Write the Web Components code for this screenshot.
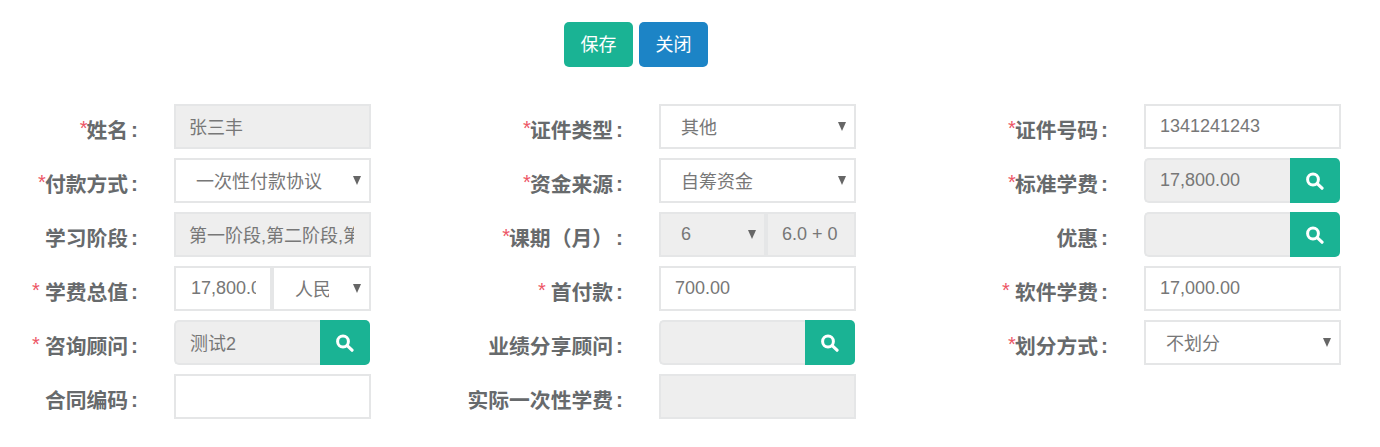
<!DOCTYPE html>
<html lang="zh"><head><meta charset="utf-8"><title>表单</title>
<style>
html,body{margin:0;padding:0;background:#fff}
body{font-family:"Liberation Sans","Noto Sans CJK SC",sans-serif;color:#777}
</style></head><body>
<form-page>
  <x-btn slot="actions" color="#1ab394">保存</x-btn>
  <x-btn slot="actions" color="#1c84c6">关闭</x-btn>

  <x-field req="tight" label="姓名"><x-input cjk disabled>张三丰</x-input></x-field>
  <x-field req="tight" label="证件类型"><x-select cjk>其他</x-select></x-field>
  <x-field req="tight" label="证件号码"><x-input>1341241243</x-input></x-field>

  <x-field req="tight" label="付款方式"><x-select cjk>一次性付款协议</x-select></x-field>
  <x-field req="tight" label="资金来源"><x-select cjk>自筹资金</x-select></x-field>
  <x-field req="tight" label="标准学费"><x-search>17,800.00</x-search></x-field>

  <x-field label="学习阶段"><x-input cjk disabled>第一阶段,第二阶段,第三阶段</x-input></x-field>
  <x-field req="tight" label="课期（月）">
    <x-pair cols="107px 90px">
      <x-select disabled>6</x-select>
      <x-input disabled>6.0 + 0</x-input>
    </x-pair>
  </x-field>
  <x-field label="优惠"><x-search></x-search></x-field>

  <x-field req="wide" label="学费总值">
    <x-pair cols="98px 99px">
      <x-input clip>17,800.00</x-input>
      <x-select cjk clip>人民币</x-select>
    </x-pair>
  </x-field>
  <x-field req="wide" label="首付款"><x-input>700.00</x-input></x-field>
  <x-field req="wide" label="软件学费"><x-input>17,000.00</x-input></x-field>

  <x-field req="wide" label="咨询顾问"><x-search cjk>测试2</x-search></x-field>
  <x-field label="业绩分享顾问"><x-search></x-search></x-field>
  <x-field req="tight" label="划分方式"><x-select cjk>不划分</x-select></x-field>

  <x-field label="合同编码"><x-input></x-input></x-field>
  <x-field label="实际一次性学费"><x-input disabled></x-input></x-field>
</form-page>
<script>
function def(name, html, init){
  const t=document.createElement('template');t.innerHTML=html;
  customElements.define(name,class extends HTMLElement{
    constructor(){super();this.attachShadow({mode:'open'}).appendChild(t.content.cloneNode(true));}
    connectedCallback(){init&&init(this)}
  });
}
const box=`box-sizing:border-box;height:45px;border:2px solid #e5e6e7;font-size:18px;line-height:41px;color:#777;background:#fff;white-space:nowrap;overflow:hidden;`;
def('form-page',`<style>
:host{display:block;height:447px;box-sizing:border-box;padding-top:22px;overflow:hidden}
.actions{display:flex;justify-content:center;gap:6px;padding-right:108px;height:45px}
.grid{display:grid;grid-template-columns:repeat(3,485px);row-gap:9px;margin-top:37px}
</style><div class="actions"><slot name="actions"></slot></div><div class="grid"><slot></slot></div>`);
def('x-btn',`<style>
:host{display:block;width:69px;height:45px;border-radius:5px;color:#fff;font-size:18px;line-height:43px;text-align:center;font-family:"Noto Sans CJK SC",sans-serif}
</style><slot></slot>`,el=>{el.style.background=el.getAttribute('color')});
def('x-field',`<style>
:host{display:grid;grid-template-columns:174px 197px;height:45px}
.l{display:flex;justify-content:flex-end;align-items:center;box-sizing:border-box;height:45px;padding:6px 36px 0 0;font:700 20.8px/39px "Noto Sans CJK SC",sans-serif;color:#676a6c;white-space:nowrap}
.s{color:#ed5565;font:400 20px/39px "Liberation Sans",sans-serif;position:relative;top:-1px;left:1px}
.s.wide{margin-right:6px}
.c{margin-left:3px;font-family:"Liberation Sans",sans-serif}
</style><div class="l"><span class="s" hidden>*</span><span class="t"></span><span class="c">:</span></div><div><slot></slot></div>`,el=>{
  const r=el.shadowRoot,q=el.getAttribute('req'),s=r.querySelector('.s');
  r.querySelector('.t').textContent=el.getAttribute('label');
  if(q){s.hidden=false;s.classList.toggle('wide',q==='wide')}
});
def('x-input',`<style>
:host{display:block;${box}padding:0 15px 0 14px}
:host([disabled]){background:#eee}
.v{display:block;overflow:hidden;height:41px}
:host([cjk]) .v{line-height:44px;margin-left:-1px}
:host([clip]){padding-left:15px;padding-right:14px}
</style><span class="v"><slot></slot></span>`);
def('x-select',`<style>
:host{display:block;position:relative;${box}padding-left:20px;padding-right:40px;border-radius:0}
:host([disabled]){background:#eee}
:host([clip]){padding-left:21px}
.v{display:block;overflow:hidden;height:41px;line-height:41px}
:host([cjk]) .v{line-height:44px}
.a{position:absolute;right:8px;top:16px;width:0;height:0;border-left:4.5px solid transparent;border-right:4.5px solid transparent;border-top:9px solid #666}
</style><span class="v"><slot></slot></span><span class="a"></span>`);
def('x-pair',`<style>:host{display:grid}</style><slot></slot>`,el=>{el.style.gridTemplateColumns=el.getAttribute('cols')});
def('x-search',`<style>
:host{display:flex;height:45px;width:196px}
.f{flex:1;min-width:0;${box}padding:0 14px;background:#eee;border-right:0;border-radius:5px 0 0 5px}
:host([cjk]) .f{line-height:44px}
button{all:unset;box-sizing:border-box;width:50px;height:45px;background:#1ab394;border-radius:0 5px 5px 0;display:flex;align-items:center;justify-content:center}
svg{display:block}
</style><div class="f"><slot></slot></div><button aria-label="搜索"><svg width="18" height="18" viewBox="0 0 18 18" fill="none" stroke="#fff"><circle cx="7" cy="7.5" r="5.4" stroke-width="3"/><path d="M11.2 11.7 L16 16.2" stroke-width="3.2" stroke-linecap="round"/></svg></button>`);
</script>
</body></html>
